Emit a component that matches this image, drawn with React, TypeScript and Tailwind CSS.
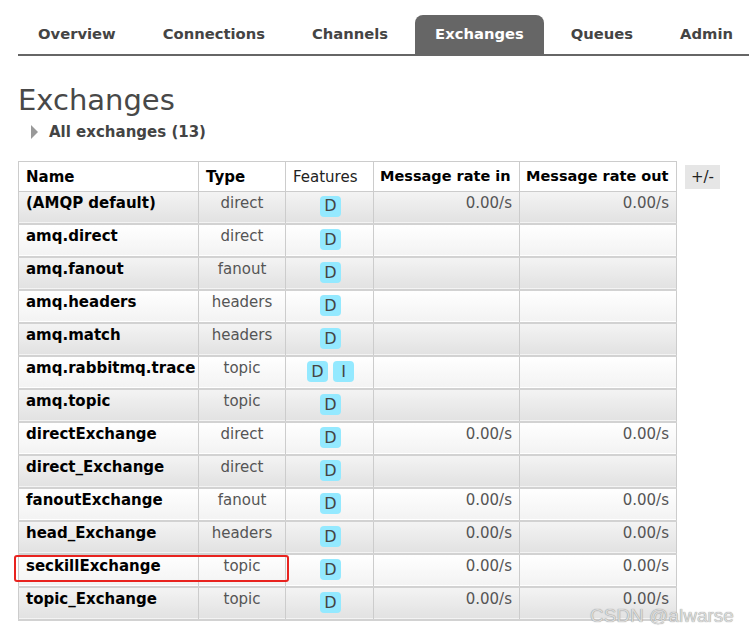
import React from 'react'

const tabs = ['Overview', 'Connections', 'Channels', 'Exchanges', 'Queues', 'Admin']

type Row = { name: string; type: string; features: string[]; rin: string; rout: string }

const rows: Row[] = [
  { name: '(AMQP default)', type: 'direct', features: ['D'], rin: '0.00/s', rout: '0.00/s' },
  { name: 'amq.direct', type: 'direct', features: ['D'], rin: '', rout: '' },
  { name: 'amq.fanout', type: 'fanout', features: ['D'], rin: '', rout: '' },
  { name: 'amq.headers', type: 'headers', features: ['D'], rin: '', rout: '' },
  { name: 'amq.match', type: 'headers', features: ['D'], rin: '', rout: '' },
  { name: 'amq.rabbitmq.trace', type: 'topic', features: ['D', 'I'], rin: '', rout: '' },
  { name: 'amq.topic', type: 'topic', features: ['D'], rin: '', rout: '' },
  { name: 'directExchange', type: 'direct', features: ['D'], rin: '0.00/s', rout: '0.00/s' },
  { name: 'direct_Exchange', type: 'direct', features: ['D'], rin: '', rout: '' },
  { name: 'fanoutExchange', type: 'fanout', features: ['D'], rin: '0.00/s', rout: '0.00/s' },
  { name: 'head_Exchange', type: 'headers', features: ['D'], rin: '0.00/s', rout: '0.00/s' },
  { name: 'seckillExchange', type: 'topic', features: ['D'], rin: '0.00/s', rout: '0.00/s' },
  { name: 'topic_Exchange', type: 'topic', features: ['D'], rin: '0.00/s', rout: '0.00/s' },
]

const Badge = ({ label }: { label: string }) => (
  <span className="inline-flex h-[21px] w-[21px] items-center justify-center rounded-[4px] bg-[#94e9ff] text-[16px] leading-none text-[#444]">
    {label}
  </span>
)

export default function App() {
  return (
    <div className="relative h-[633px] w-[749px] overflow-hidden bg-white font-['DejaVu_Sans',Verdana,sans-serif] text-[#444]">
      {/* tabs */}
      <div className="ml-[18px] mt-[15px] flex h-[41px] gap-[7px] border-b-2 border-[#666]">
        {tabs.map((t) => (
          <div
            key={t}
            className={`flex h-[39px] items-center rounded-t-[8px] px-5 text-[14.75px] font-bold ${
              t === 'Exchanges' ? 'bg-[#666] text-white' : 'text-[#444]'
            }`}
          >
            {t}
          </div>
        ))}
      </div>

      <h1 className="ml-[18px] mt-[27px] text-[29px] leading-[34px] font-normal text-[#484848]">Exchanges</h1>
      <div className="ml-[31px] mt-[4px] flex items-center gap-[11px] text-[15px] font-bold text-[#444]">
        <span className="h-0 w-0 border-y-[7px] border-l-[7px] border-y-transparent border-l-[#999]" />
        <span>All exchanges (13)</span>
      </div>

      <div className="ml-[18px] mt-[17px] flex items-start gap-2">
        <table className="w-[658px] table-fixed border-collapse text-[15px]">
          <colgroup>
            <col className="w-[180px]" />
            <col className="w-[87px]" />
            <col className="w-[88px]" />
            <col className="w-[146px]" />
            <col className="w-[157px]" />
          </colgroup>
          <thead>
            <tr className="bg-white text-black">
              <th className="h-[30px] whitespace-nowrap border border-[#ccc] px-[7px] pt-[2px] text-left font-bold">Name</th>
              <th className="h-[30px] whitespace-nowrap border border-[#ccc] px-[7px] pt-[2px] text-left font-bold">Type</th>
              <th className="h-[30px] whitespace-nowrap border border-[#ccc] px-[7px] pt-[2px] text-left font-normal text-[#222]">Features</th>
              <th className="h-[30px] whitespace-nowrap border border-[#ccc] px-[6px] pt-[2px] text-left text-[14.5px] font-bold">Message rate in</th>
              <th className="h-[30px] whitespace-nowrap border border-[#ccc] px-[6px] pt-[2px] text-left text-[14.5px] font-bold">Message rate out</th>
            </tr>
          </thead>
          <tbody>
            {rows.map((r, i) => (
              <tr
                key={r.name}
                className={`border-b-2 border-[#d2d2d2] ${
                  i % 2 === 0
                    ? 'bg-gradient-to-b from-[#f4f4f4] to-[#e2e2e2]'
                    : 'bg-gradient-to-b from-white to-[#f3f3f3]'
                }`}
              >
                <td className="h-[33px] whitespace-nowrap border-x border-[#ccc] px-[7px] pt-[2px] align-top font-bold leading-[18px] text-black">{r.name}</td>
                <td className="h-[33px] border-x border-[#ccc] px-[7px] pt-[2px] text-center align-top leading-[18px] text-[#555]">{r.type}</td>
                <td className="h-[33px] border-x border-[#ccc] pt-[4px] align-top">
                  <div className="flex justify-center gap-[5px] pl-[2px]">
                    {r.features.map((f) => (
                      <Badge key={f} label={f} />
                    ))}
                  </div>
                </td>
                <td className="h-[33px] border-x border-[#ccc] px-[7px] pt-[2px] text-right align-top leading-[18px] text-[#555]">{r.rin}</td>
                <td className="h-[33px] border-x border-[#ccc] px-[7px] pt-[2px] text-right align-top leading-[18px] text-[#555]">{r.rout}</td>
              </tr>
            ))}
          </tbody>
        </table>
        <div className="mt-[4px] bg-[#e6e6e6] px-[6px] py-[1px] text-[15px] text-[#222]">+/-</div>
      </div>

      {/* annotation */}
      <div className="absolute left-[14px] top-[555px] h-[27px] w-[275px] rounded-[3px] border-2 border-[#e8231f]" />
      <div className="absolute left-[590px] top-[602px] font-['Liberation_Sans',sans-serif] text-[19px] text-[#dadada] [text-shadow:0_0_1px_#777]">
        CSDN @alwarse
      </div>
    </div>
  )
}
